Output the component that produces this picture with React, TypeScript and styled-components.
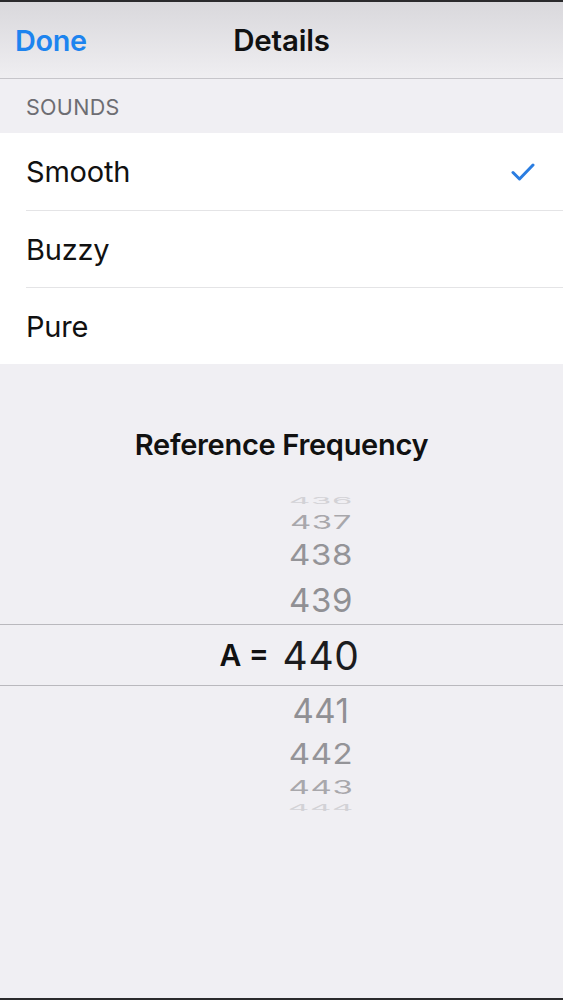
import React from 'react';
import styled, { createGlobalStyle } from 'styled-components';

const GlobalStyle = createGlobalStyle`
  html, body {
    margin: 0;
    padding: 0;
    background: #2a2a2c;
  }
  body {
    font-family: Inter, "Noto Sans", "Liberation Sans", sans-serif;
    -webkit-font-smoothing: antialiased;
  }
`;

const Screen = styled.div`
  box-sizing: border-box;
  margin: 2px 0;
  height: 996px;
  background: #f0eff3;
  display: flex;
  flex-direction: column;
  overflow: hidden;
`;

const NavBar = styled.header`
  height: 76px;
  display: grid;
  grid-template-columns: 1fr auto 1fr;
  align-items: center;
  background: linear-gradient(#d9d8dc, #efeef1);
  border-bottom: 1px solid #c6c5ca;
  padding: 0 15px;
`;

const NavButton = styled.button`
  justify-self: start;
  border: 0;
  background: none;
  padding: 0;
  font: inherit;
  font-size: 28.8px;
  font-weight: 600;
  color: #1d84ef;
  letter-spacing: -0.3px;
`;

const NavTitle = styled.h1`
  margin: 0;
  font-size: 29.5px;
  font-weight: 600;
  color: #111;
  letter-spacing: -0.2px;
`;

const SectionHeader = styled.div`
  height: 54px;
  display: flex;
  align-items: center;
  padding: 2px 26px 0;
  box-sizing: border-box;
  font-size: 21.5px;
  color: #6d6d72;
  letter-spacing: 0.3px;
`;

const List = styled.ul`
  list-style: none;
  margin: 0;
  padding: 0;
  background: #fff;
`;

const Row = styled.li`
  height: 77px;
  display: flex;
  align-items: center;
  justify-content: space-between;
  margin-left: 26px;
  padding-right: 28px;
  font-size: 29px;
  color: #111;
  box-sizing: border-box;
  letter-spacing: -0.2px;
  & + & {
    border-top: 1px solid #e4e4e6;
  }
`;

const Check = () => (
  <svg width="24" height="20" viewBox="0 0 24 20">
    <path d="M2 10.5 L8.5 17 L22 3" fill="none" stroke="#2a7de1" strokeWidth="3" strokeLinecap="round" strokeLinejoin="round" />
  </svg>
);

const PickerTitle = styled.h2`
  margin: 65px 0 0;
  height: 32px;
  line-height: 32px;
  text-align: center;
  font-size: 29px;
  font-weight: 600;
  color: #111;
  letter-spacing: -0.3px;
`;

const Picker = styled.div`
  margin-top: 33px;
  display: flex;
  flex-direction: column;
`;

const PickerRow = styled.div<{ $h: number; $selected?: boolean }>`
  height: ${({ $h }) => $h}px;
  display: grid;
  grid-template-columns: 271px 100px 1fr;
  grid-template-rows: minmax(0, 1fr);
  align-items: center;
  box-sizing: border-box;
  ${({ $selected }) => $selected && `
    border-top: 1px solid #b9b8bd;
    border-bottom: 1px solid #b9b8bd;
  `}
`;

const PickerLabel = styled.span`
  justify-self: end;
  padding-right: 2px;
  font-size: 30px;
  font-weight: 600;
  color: #111;
`;

const PickerValue = styled.span<{ $scale: number; $fade: number; $selected?: boolean }>`
  justify-self: center;
  display: inline-block;
  font-size: ${({ $selected }) => ($selected ? 39 : 33)}px;
  line-height: 1;
  color: ${({ $selected }) => ($selected ? '#1c1c1e' : '#909094')};
  opacity: ${({ $fade }) => $fade};
  transform: scaleY(${({ $scale }) => $scale});
  letter-spacing: 0.6px;
`;

const values = [
  { n: 436, h: 15, scale: 0.25, fade: 0.3 },
  { n: 437, h: 26, scale: 0.55, fade: 0.75 },
  { n: 438, h: 41, scale: 0.86, fade: 0.95 },
  { n: 439, h: 48, scale: 1, fade: 1 },
  { n: 440, h: 62, scale: 1, fade: 1, selected: true },
  { n: 441, h: 48, scale: 1.05, fade: 1 },
  { n: 442, h: 41, scale: 0.86, fade: 0.95 },
  { n: 443, h: 25, scale: 0.55, fade: 0.75 },
  { n: 444, h: 16, scale: 0.25, fade: 0.3 },
];

const sounds = ['Smooth', 'Buzzy', 'Pure'];

export default function App() {
  return (
    <>
      <GlobalStyle />
      <Screen>
        <NavBar>
          <NavButton>Done</NavButton>
          <NavTitle>Details</NavTitle>
        </NavBar>
        <SectionHeader>SOUNDS</SectionHeader>
        <List>
          {sounds.map((s, i) => (
            <Row key={s}>
              {s}
              {i === 0 && <Check />}
            </Row>
          ))}
        </List>
        <PickerTitle>Reference Frequency</PickerTitle>
        <Picker>
          {values.map((v) => (
            <PickerRow key={v.n} $h={v.h} $selected={v.selected}>
              <PickerLabel>{v.selected ? 'A =' : ''}</PickerLabel>
              <PickerValue $scale={v.scale} $fade={v.fade} $selected={v.selected}>{v.n}</PickerValue>
            </PickerRow>
          ))}
        </Picker>
      </Screen>
    </>
  );
}
